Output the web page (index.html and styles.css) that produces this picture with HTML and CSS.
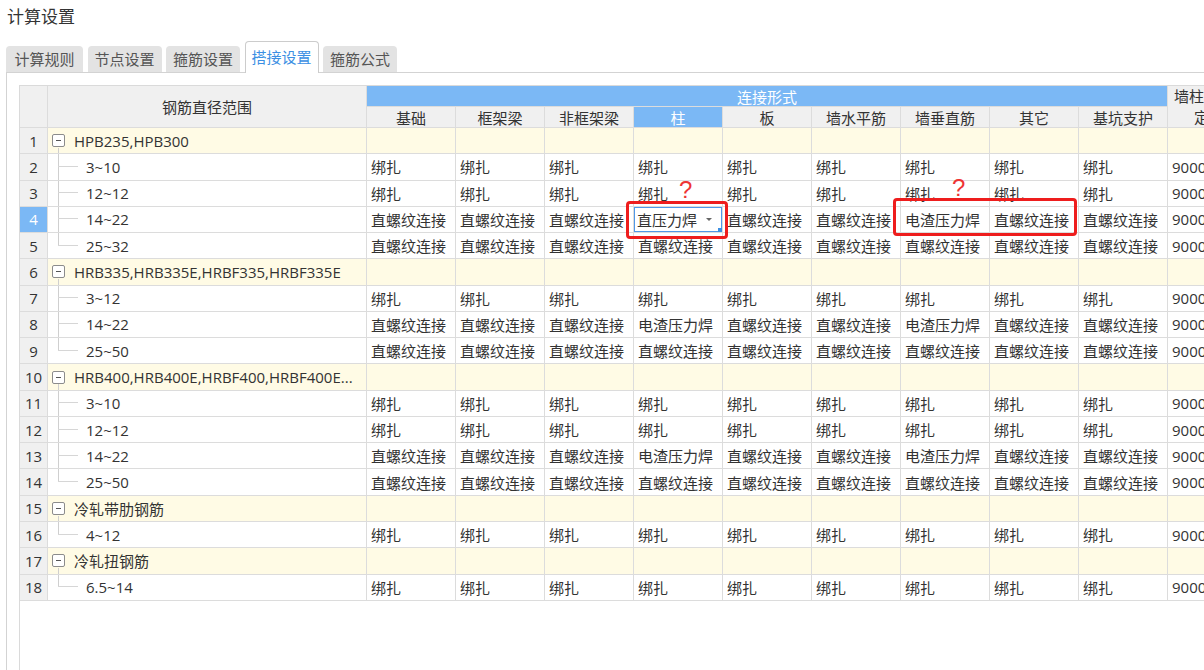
FILE: index.html
```html
<!DOCTYPE html>
<html lang="zh-CN">
<head>
<meta charset="utf-8">
<title>计算设置</title>
<link rel="stylesheet" href="styles.css">
</head>
<body>
<div class="app">
  <div class="title">计算设置</div>
  <div class="tabs">
    <div class="tab first">计算规则</div>
    <div class="tab">节点设置</div>
    <div class="tab">箍筋设置</div>
    <div class="tab active">搭接设置</div>
    <div class="tab">箍筋公式</div>
  </div>
  <div class="panel">
    <div class="sheet">
      <div class="grid">
        <div class="cell hd span2"></div>
        <div class="cell hd span2 center">钢筋直径范围</div>
        <div class="cell hd blue group-hd center">连接形式</div>
        <div class="cell hd span2 wrap"><span class="wrap-text">墙柱垂直筋<br>定尺</span></div>
        <div class="cell hd center">基础</div>
        <div class="cell hd center">框架梁</div>
        <div class="cell hd center">非框架梁</div>
        <div class="cell hd blue center">柱</div>
        <div class="cell hd center">板</div>
        <div class="cell hd center">墙水平筋</div>
        <div class="cell hd center">墙垂直筋</div>
        <div class="cell hd center">其它</div>
        <div class="cell hd center">基坑支护</div>

        <!-- 1 -->
        <div class="cell num">1</div>
        <div class="cell rng grp gline"><span class="tog"></span>HPB235,HPB300</div>
        <div class="cell grp"></div><div class="cell grp"></div><div class="cell grp"></div><div class="cell grp"></div><div class="cell grp"></div><div class="cell grp"></div><div class="cell grp"></div><div class="cell grp"></div><div class="cell grp"></div><div class="cell grp"></div>
        <!-- 2 -->
        <div class="cell num">2</div>
        <div class="cell rng child">3~10</div>
        <div class="cell">绑扎</div><div class="cell">绑扎</div><div class="cell">绑扎</div><div class="cell">绑扎</div><div class="cell">绑扎</div><div class="cell">绑扎</div><div class="cell">绑扎</div><div class="cell">绑扎</div><div class="cell">绑扎</div><div class="cell">9000</div>
        <!-- 3 -->
        <div class="cell num">3</div>
        <div class="cell rng child">12~12</div>
        <div class="cell">绑扎</div><div class="cell">绑扎</div><div class="cell">绑扎</div><div class="cell">绑扎</div><div class="cell">绑扎</div><div class="cell">绑扎</div><div class="cell">绑扎</div><div class="cell">绑扎</div><div class="cell">绑扎</div><div class="cell">9000</div>
        <!-- 4 -->
        <div class="cell num sel">4</div>
        <div class="cell rng child">14~22</div>
        <div class="cell">直螺纹连接</div><div class="cell">直螺纹连接</div><div class="cell">直螺纹连接</div>
        <div class="cell edit"><span class="edit-box">直压力焊<i class="caret"></i></span></div>
        <div class="cell">直螺纹连接</div><div class="cell">直螺纹连接</div><div class="cell">电渣压力焊</div><div class="cell">直螺纹连接</div><div class="cell">直螺纹连接</div><div class="cell">9000</div>
        <!-- 5 -->
        <div class="cell num">5</div>
        <div class="cell rng child last">25~32</div>
        <div class="cell">直螺纹连接</div><div class="cell">直螺纹连接</div><div class="cell">直螺纹连接</div><div class="cell">直螺纹连接</div><div class="cell">直螺纹连接</div><div class="cell">直螺纹连接</div><div class="cell">直螺纹连接</div><div class="cell">直螺纹连接</div><div class="cell">直螺纹连接</div><div class="cell">9000</div>
        <!-- 6 -->
        <div class="cell num">6</div>
        <div class="cell rng grp gline"><span class="tog"></span>HRB335,HRB335E,HRBF335,HRBF335E</div>
        <div class="cell grp"></div><div class="cell grp"></div><div class="cell grp"></div><div class="cell grp"></div><div class="cell grp"></div><div class="cell grp"></div><div class="cell grp"></div><div class="cell grp"></div><div class="cell grp"></div><div class="cell grp"></div>
        <!-- 7 -->
        <div class="cell num">7</div>
        <div class="cell rng child">3~12</div>
        <div class="cell">绑扎</div><div class="cell">绑扎</div><div class="cell">绑扎</div><div class="cell">绑扎</div><div class="cell">绑扎</div><div class="cell">绑扎</div><div class="cell">绑扎</div><div class="cell">绑扎</div><div class="cell">绑扎</div><div class="cell">9000</div>
        <!-- 8 -->
        <div class="cell num">8</div>
        <div class="cell rng child">14~22</div>
        <div class="cell">直螺纹连接</div><div class="cell">直螺纹连接</div><div class="cell">直螺纹连接</div><div class="cell">电渣压力焊</div><div class="cell">直螺纹连接</div><div class="cell">直螺纹连接</div><div class="cell">电渣压力焊</div><div class="cell">直螺纹连接</div><div class="cell">直螺纹连接</div><div class="cell">9000</div>
        <!-- 9 -->
        <div class="cell num">9</div>
        <div class="cell rng child last">25~50</div>
        <div class="cell">直螺纹连接</div><div class="cell">直螺纹连接</div><div class="cell">直螺纹连接</div><div class="cell">直螺纹连接</div><div class="cell">直螺纹连接</div><div class="cell">直螺纹连接</div><div class="cell">直螺纹连接</div><div class="cell">直螺纹连接</div><div class="cell">直螺纹连接</div><div class="cell">9000</div>
        <!-- 10 -->
        <div class="cell num">10</div>
        <div class="cell rng grp gline"><span class="tog"></span>HRB400,HRB400E,HRBF400,HRBF400E...</div>
        <div class="cell grp"></div><div class="cell grp"></div><div class="cell grp"></div><div class="cell grp"></div><div class="cell grp"></div><div class="cell grp"></div><div class="cell grp"></div><div class="cell grp"></div><div class="cell grp"></div><div class="cell grp"></div>
        <!-- 11 -->
        <div class="cell num">11</div>
        <div class="cell rng child">3~10</div>
        <div class="cell">绑扎</div><div class="cell">绑扎</div><div class="cell">绑扎</div><div class="cell">绑扎</div><div class="cell">绑扎</div><div class="cell">绑扎</div><div class="cell">绑扎</div><div class="cell">绑扎</div><div class="cell">绑扎</div><div class="cell">9000</div>
        <!-- 12 -->
        <div class="cell num">12</div>
        <div class="cell rng child">12~12</div>
        <div class="cell">绑扎</div><div class="cell">绑扎</div><div class="cell">绑扎</div><div class="cell">绑扎</div><div class="cell">绑扎</div><div class="cell">绑扎</div><div class="cell">绑扎</div><div class="cell">绑扎</div><div class="cell">绑扎</div><div class="cell">9000</div>
        <!-- 13 -->
        <div class="cell num">13</div>
        <div class="cell rng child">14~22</div>
        <div class="cell">直螺纹连接</div><div class="cell">直螺纹连接</div><div class="cell">直螺纹连接</div><div class="cell">电渣压力焊</div><div class="cell">直螺纹连接</div><div class="cell">直螺纹连接</div><div class="cell">电渣压力焊</div><div class="cell">直螺纹连接</div><div class="cell">直螺纹连接</div><div class="cell">9000</div>
        <!-- 14 -->
        <div class="cell num">14</div>
        <div class="cell rng child last">25~50</div>
        <div class="cell">直螺纹连接</div><div class="cell">直螺纹连接</div><div class="cell">直螺纹连接</div><div class="cell">直螺纹连接</div><div class="cell">直螺纹连接</div><div class="cell">直螺纹连接</div><div class="cell">直螺纹连接</div><div class="cell">直螺纹连接</div><div class="cell">直螺纹连接</div><div class="cell">9000</div>
        <!-- 15 -->
        <div class="cell num">15</div>
        <div class="cell rng grp gline"><span class="tog"></span>冷轧带肋钢筋</div>
        <div class="cell grp"></div><div class="cell grp"></div><div class="cell grp"></div><div class="cell grp"></div><div class="cell grp"></div><div class="cell grp"></div><div class="cell grp"></div><div class="cell grp"></div><div class="cell grp"></div><div class="cell grp"></div>
        <!-- 16 -->
        <div class="cell num">16</div>
        <div class="cell rng child last">4~12</div>
        <div class="cell">绑扎</div><div class="cell">绑扎</div><div class="cell">绑扎</div><div class="cell">绑扎</div><div class="cell">绑扎</div><div class="cell">绑扎</div><div class="cell">绑扎</div><div class="cell">绑扎</div><div class="cell">绑扎</div><div class="cell">9000</div>
        <!-- 17 -->
        <div class="cell num">17</div>
        <div class="cell rng grp gline"><span class="tog"></span>冷轧扭钢筋</div>
        <div class="cell grp"></div><div class="cell grp"></div><div class="cell grp"></div><div class="cell grp"></div><div class="cell grp"></div><div class="cell grp"></div><div class="cell grp"></div><div class="cell grp"></div><div class="cell grp"></div><div class="cell grp"></div>
        <!-- 18 -->
        <div class="cell num">18</div>
        <div class="cell rng child last">6.5~14</div>
        <div class="cell">绑扎</div><div class="cell">绑扎</div><div class="cell">绑扎</div><div class="cell">绑扎</div><div class="cell">绑扎</div><div class="cell">绑扎</div><div class="cell">绑扎</div><div class="cell">绑扎</div><div class="cell">绑扎</div><div class="cell">9000</div>
      </div>
    </div>
  </div>

  <div class="mark mark-a"></div>
  <div class="mark mark-b"></div>
  <span class="qmark qmark-a">?</span>
  <span class="qmark qmark-b">?</span>
</div>
</body>
</html>
```

FILE: styles.css
```css
html, body {
  margin: 0;
  padding: 0;
  background: #ffffff;
}

.app {
  position: relative;
  width: 1204px;
  height: 670px;
  overflow: hidden;
  display: flex;
  flex-direction: column;
  font-family: "Open Sans", "Noto Sans CJK SC", sans-serif;
  color: #333333;
}

.title {
  height: 41px;
  box-sizing: border-box;
  padding: 5px 0 0 7px;
  font-family: "Noto Sans CJK SC", sans-serif;
  font-size: 17px;
  line-height: 22px;
  color: #333333;
}

.tabs {
  height: 31px;
  display: flex;
  align-items: flex-end;
  gap: 4.5px;
  padding-left: 6px;
}

.tab {
  height: 26px;
  box-sizing: border-box;
  padding: 0 7px;
  background: #e3e3e3;
  border-radius: 4px 4px 0 0;
  font-family: "Noto Sans CJK SC", sans-serif;
  font-size: 15px;
  line-height: 26px;
  color: #555555;
  white-space: nowrap;
}

.tab.first {
  padding: 0 8.5px;
}

.tab.active {
  position: relative;
  z-index: 1;
  height: 32px;
  margin-bottom: -1px;
  padding: 0 6px;
  background: #ffffff;
  border: 1px solid #cccccc;
  border-bottom: none;
  line-height: 30px;
  color: #3b8fe3;
}

.panel {
  flex: 1;
  min-height: 0;
  margin-left: 6px;
  border-top: 1px solid #d3d3d3;
  border-left: 1px solid #d3d3d3;
  padding: 12px 0 0 12px;
  display: flex;
  flex-direction: column;
}

.sheet {
  flex: 1;
  min-height: 0;
  border-top: 1px solid #dadada;
  border-left: 1px solid #dadada;
  overflow: hidden;
}

.grid {
  display: grid;
  grid-template-columns: 28px 319px repeat(10, 89px);
  grid-template-rows: 21px 21px repeat(18, 26.28px);
  width: max-content;
}

.cell {
  box-sizing: border-box;
  border-right: 1px solid #dcdcdc;
  border-bottom: 1px solid #dcdcdc;
  display: flex;
  align-items: center;
  padding-left: 4px;
  font-size: 15px;
  white-space: nowrap;
  overflow: hidden;
  background: #ffffff;
}

.hd {
  background: #f0f0f0;
  padding-left: 0;
}

.center {
  justify-content: center;
}

.span2 {
  grid-row: span 2;
}

.group-hd {
  grid-column: span 9;
}

.blue {
  background: #7bb8f5;
  color: #ffffff;
}

.wrap {
  justify-content: flex-start;
  padding-left: 6px;
}

.wrap-text {
  display: block;
  width: 70px;
  text-align: center;
  line-height: 21px;
}

.num {
  background: #f0f0f0;
  justify-content: center;
  padding-left: 0;
}

.num.sel {
  background: #7bb8f5;
  color: #ffffff;
}

.grp {
  background: #fffbe5;
}

.rng {
  position: relative;
  overflow: hidden;
}

.rng.grp {
  padding-left: 4px;
}

.tog {
  position: relative;
  width: 13px;
  height: 13px;
  box-sizing: border-box;
  border: 1px solid #8c8c8c;
  border-radius: 2px;
  background: #ffffff;
  margin-right: 9px;
  flex: none;
}

.tog::before {
  content: "";
  position: absolute;
  left: 3px;
  right: 3px;
  top: 5px;
  height: 1px;
  background: #555555;
}

.gline::after {
  content: "";
  position: absolute;
  left: 10px;
  top: 20px;
  bottom: -1px;
  width: 1px;
  background: #cfcfcf;
}

.child {
  padding-left: 38px;
}

.child::before {
  content: "";
  position: absolute;
  left: 10px;
  top: -1px;
  bottom: -1px;
  width: 1px;
  background: #cfcfcf;
}

.child.last::before {
  bottom: 50%;
}

.child::after {
  content: "";
  position: absolute;
  left: 10px;
  top: 50%;
  width: 20px;
  height: 1px;
  margin-top: -1px;
  background: #d6d6d6;
}

.edit {
  padding: 0;
}

.edit-box {
  position: relative;
  align-self: stretch;
  flex: 1;
  display: flex;
  align-items: center;
  border: 1px solid #4f98e8;
  padding-left: 2px;
}

.edit-box::after {
  content: "";
  position: absolute;
  right: -1px;
  bottom: -1px;
  width: 4px;
  height: 4px;
  background: #3b8fe3;
}

.caret {
  margin-left: 9px;
  width: 0;
  height: 0;
  border-left: 3px solid transparent;
  border-right: 3px solid transparent;
  border-top: 3px solid #666666;
}

.mark {
  position: absolute;
  box-sizing: border-box;
  border: 3px solid #ee1d1d;
  border-radius: 4px;
}

.mark-a {
  left: 626px;
  top: 201px;
  width: 102px;
  height: 38px;
}

.mark-b {
  left: 893px;
  top: 198px;
  width: 184px;
  height: 38px;
}

.qmark {
  position: absolute;
  font-family: "Liberation Sans", sans-serif;
  font-size: 24px;
  line-height: 24px;
  color: #ee3434;
}

.qmark-a {
  left: 679px;
  top: 178px;
}

.qmark-b {
  left: 952px;
  top: 176px;
}
```
